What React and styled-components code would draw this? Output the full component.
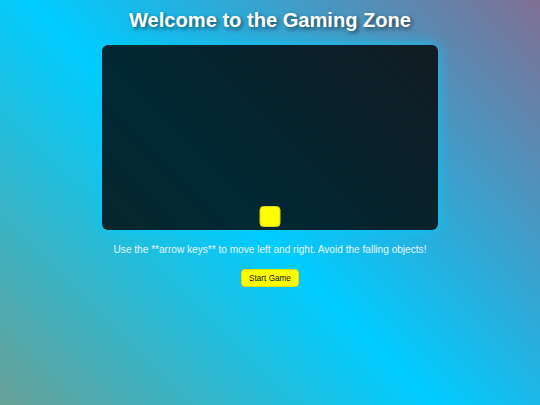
import React from 'react'
import styled, { createGlobalStyle } from 'styled-components'

const GlobalStyle = createGlobalStyle`
	html, body {
		margin: 0;
		padding: 0;
		height: 100%;
	}
	body {
		font-family: 'Liberation Sans', Arial, sans-serif;
	}
`

const Page = styled.div`
	min-height: 100vh;
	box-sizing: border-box;
	padding-top: 8px;
	display: flex;
	flex-direction: column;
	align-items: center;
	background: linear-gradient(45deg, #68a096 0%, #00ccff 46%, #7f6f93 100%);
`

const Title = styled.h1`
	margin: 0 0 13px;
	font-size: 20.1px;
	line-height: 24px;
	font-weight: bold;
	color: #ffffff;
	text-shadow: 2px 2px 4px rgba(0, 0, 0, 0.55);
`

const GameArea = styled.div`
	position: relative;
	width: 336px;
	height: 185px;
	box-sizing: border-box;
	border-radius: 6px;
	background: rgba(0, 0, 0, 0.8);
	box-shadow: 0 0 14px rgba(0, 204, 255, 0.85);
	overflow: hidden;
`

const Player = styled.div`
	position: absolute;
	left: 50%;
	bottom: 3px;
	width: 21px;
	height: 21px;
	box-sizing: border-box;
	transform: translateX(-50%);
	background: #ffff00;
	border: 1px solid #d8d800;
	border-radius: 4px;
`

const Instructions = styled.p`
	margin: 13px 0 12px;
	font-size: 10.1px;
	line-height: 14px;
	color: #e6f5fc;
`

const StartButton = styled.button`
	width: 58px;
	height: 18px;
	padding: 0;
	border: 1px solid #e0e000;
	border-radius: 4px;
	background: #ffff00;
	color: #111;
	font-family: 'Liberation Sans', Arial, sans-serif;
	font-size: 8.2px;
	cursor: pointer;
`

export default function App() {
	return (
		<>
			<GlobalStyle />
			<Page>
				<Title>Welcome to the Gaming Zone</Title>
				<GameArea>
					<Player />
				</GameArea>
				<Instructions>
					Use the **arrow keys** to move left and right. Avoid the falling objects!
				</Instructions>
				<StartButton>Start Game</StartButton>
			</Page>
		</>
	)
}
